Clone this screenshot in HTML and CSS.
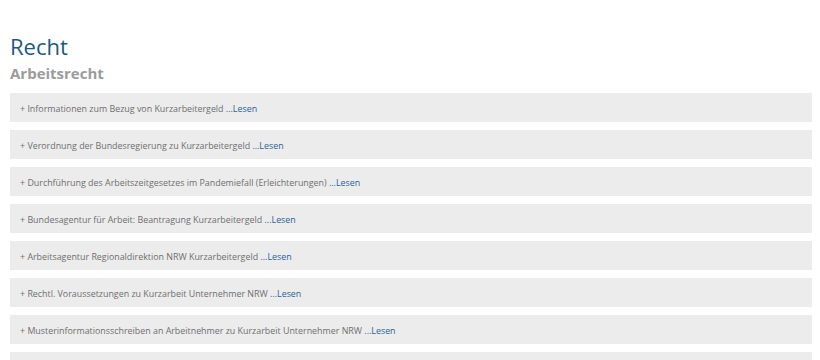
FILE: index.html
```html
<!DOCTYPE html>
<html lang="de">
<head>
<meta charset="utf-8">
<title>Recht</title>
<link rel="stylesheet" href="styles.css">
</head>
<body>
<main class="page">
  <h1 class="title">Recht</h1>
  <h2 class="subtitle">Arbeitsrecht</h2>
  <ul class="list">
    <li class="item"><span class="plus">+</span> Informationen zum Bezug von Kurzarbeitergeld <a class="more" href="#">...Lesen</a></li>
    <li class="item"><span class="plus">+</span> Verordnung der Bundesregierung zu Kurzarbeitergeld <a class="more" href="#">...Lesen</a></li>
    <li class="item"><span class="plus">+</span> Durchführung des Arbeitszeitgesetzes im Pandemiefall (Erleichterungen) <a class="more" href="#">...Lesen</a></li>
    <li class="item"><span class="plus">+</span> Bundesagentur für Arbeit: Beantragung Kurzarbeitergeld <a class="more" href="#">...Lesen</a></li>
    <li class="item"><span class="plus">+</span> Arbeitsagentur Regionaldirektion NRW Kurzarbeitergeld <a class="more" href="#">...Lesen</a></li>
    <li class="item"><span class="plus">+</span> Rechtl. Voraussetzungen zu Kurzarbeit Unternehmer NRW <a class="more" href="#">...Lesen</a></li>
    <li class="item"><span class="plus">+</span> Musterinformationsschreiben an Arbeitnehmer zu Kurzarbeit Unternehmer NRW <a class="more" href="#">...Lesen</a></li>
    <li class="item item-empty"></li>
  </ul>
</main>
</body>
</html>
```
FILE: styles.css
```css
html, body {
  margin: 0;
  padding: 0;
  background: #ffffff;
}
body {
  font-family: "Open Sans", "DejaVu Sans", sans-serif;
}
.page {
  padding: 33px 8px 0 10px;
}
.title {
  margin: 0;
  font-size: 22px;
  line-height: 26px;
  font-weight: 400;
  color: #1b5a7f;
}
.subtitle {
  margin: 4px 0 10px;
  font-size: 15px;
  line-height: 20px;
  font-weight: 700;
  color: #9b9b9b;
}
.list {
  list-style: none;
  margin: 0;
  padding: 0;
  display: flex;
  flex-direction: column;
  gap: 8px;
}
.item {
  height: 29px;
  box-sizing: border-box;
  background: #ececec;
  padding: 1px 10px 0;
  display: flex;
  align-items: center;
  white-space: pre;
  font-size: 8.9px;
  color: #6f6f6f;
}
.more {
  color: #2a6496;
  text-decoration: none;
}
```
